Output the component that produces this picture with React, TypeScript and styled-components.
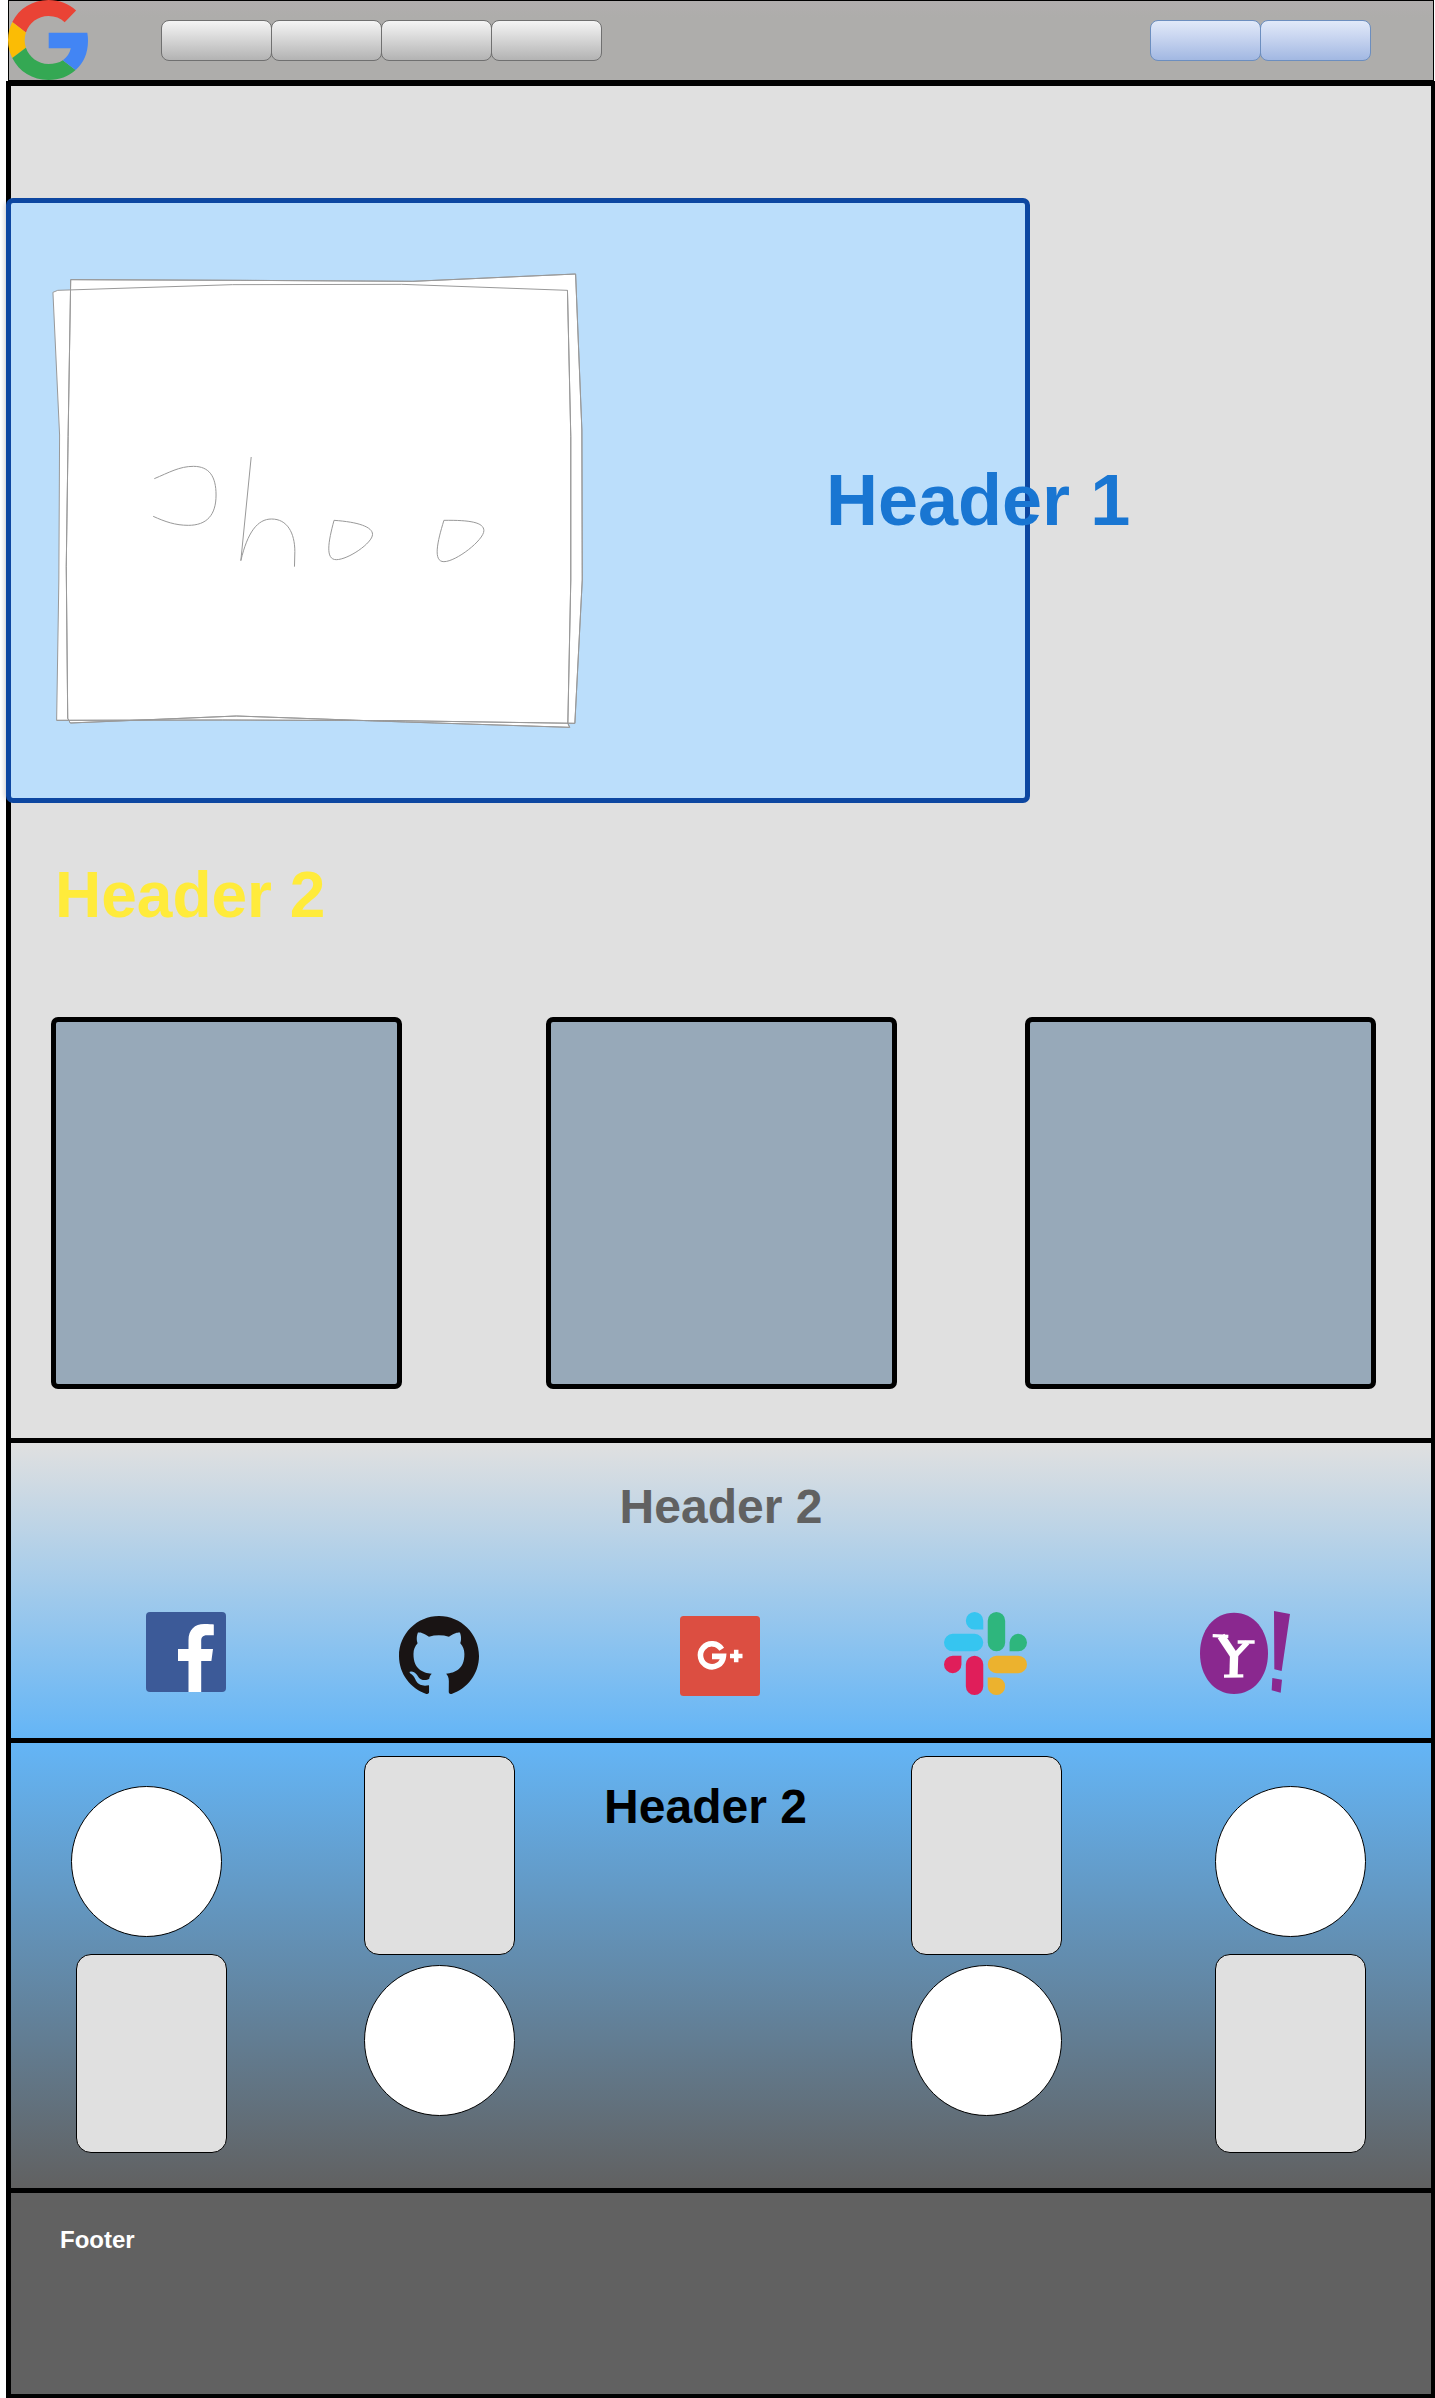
import React from "react";
import styled, { createGlobalStyle } from "styled-components";
import { SiGithub } from "react-icons/si";

const GlobalStyle = createGlobalStyle`
  body {
    margin: 0;
    background: #ffffff;
    font-family: "Liberation Sans", Arial, sans-serif;
  }
  *, *::before, *::after { box-sizing: border-box; }
  svg { display: block; flex: none; }
`;

const Page = styled.div`
  width: 100%;
  height: 2398px;
  padding-left: 6px;
  overflow: hidden;
`;

const TopBar = styled.header`
  display: flex;
  align-items: flex-start;
  width: 1426px;
  height: 81px;
  margin-left: 2px;
  border: 1px solid #000;
  background: linear-gradient(#b1aeae, #aeadab 20%, #aeadab);
`;

const LogoLink = styled.div`
  margin: -1px 0 0 -1px;
`;

const ButtonGroup = styled.nav<{ $start: number }>`
  display: flex;
  margin: 19px 0 0 ${(p) => p.$start}px;
`;

const BarButton = styled.button<{ $tone: "grey" | "blue" }>`
  width: 111px;
  height: 41px;
  padding: 0;
  border-radius: 8px;
  border: 1px solid ${(p) => (p.$tone === "grey" ? "#707070" : "#6c8ebf")};
  background: ${(p) =>
    p.$tone === "grey"
      ? "linear-gradient(#f5f5f5, #b3b3b3)"
      : "linear-gradient(#e1e9f9, #c3d1ee 50%, #a2b8e2)"};

  & + & {
    margin-left: -1px;
  }
`;

const Frame = styled.div`
  width: 1430px;
  border: 5px solid #000;
`;

const Intro = styled.main`
  height: 1357px;
  padding-top: 112px;
  border-bottom: 5px solid #000;
  background: #e0e0e0;
`;

const Hero = styled.section`
  display: flex;
  width: 1024px;
  height: 605px;
  margin-left: -5px;
  padding: 47px 0 0 19px;
  border: 5px solid #0d47a1;
  border-radius: 7px;
  background: #bbdefb;
  box-shadow: -5px 0 5px -4px rgba(0, 0, 0, 0.22);
`;

const HeroTitle = styled.h1`
  margin: 208px 0 0 216px;
  color: #1976d2;
  font-size: 72px;
  line-height: 84px;
  white-space: nowrap;
`;

const SectionTitle = styled.h2`
  margin: 55px 0 0 44px;
  color: #ffeb3b;
  font-size: 64px;
  line-height: 74px;
`;

const CardRow = styled.div`
  display: flex;
  margin: 85px 0 0 40px;
`;

const Card = styled.article<{ $gap?: number }>`
  width: 351px;
  height: 372px;
  margin-left: ${(p) => p.$gap ?? 0}px;
  border: 5px solid #000;
  border-radius: 7px;
  background: #97a9b9;
`;

const Social = styled.section`
  height: 300px;
  padding-top: 36px;
  border-bottom: 5px solid #000;
  background: linear-gradient(#e0e0e0, #64b5f6);
`;

const SubTitle = styled.h2<{ $color: string }>`
  margin: 0;
  color: ${(p) => p.$color};
  font-size: 48px;
  line-height: 56px;
  text-align: center;
  white-space: nowrap;
`;

const IconRow = styled.div`
  display: flex;
  margin-top: 76px;
  padding-left: 135px;
`;

const IconSlot = styled.a<{ $gap?: number; $drop?: number }>`
  margin: ${(p) => p.$drop ?? 0}px 0 0 ${(p) => p.$gap ?? 0}px;
  color: #191414;
`;

const Team = styled.section`
  display: flex;
  height: 450px;
  border-bottom: 5px solid #000;
  background: linear-gradient(#64b5f6, #616161);
`;

const Column = styled.div<{ $top: number; $left: number; $gap: number }>`
  display: flex;
  flex: none;
  flex-direction: column;
  align-items: flex-end;
  gap: ${(p) => p.$gap}px;
  margin: ${(p) => p.$top}px 0 0 ${(p) => p.$left}px;
`;

const Disc = styled.div<{ $inset?: number }>`
  width: 151px;
  height: 151px;
  margin-right: ${(p) => p.$inset ?? 0}px;
  border: 1px solid #000;
  border-radius: 50%;
  background: #fff;
`;

const Panel = styled.div`
  width: 151px;
  height: 199px;
  border: 1px solid #000;
  border-radius: 15px;
  background: #e0e0e0;
`;

const TeamHeading = styled.div`
  width: 396px;
  padding: 36px 15px 0 0;
`;

const Footer = styled.footer`
  height: 201px;
  padding: 33px 0 0 49px;
  background: #616161;
  color: #fff;
  font-size: 24px;
  font-weight: 700;
  line-height: 28px;
`;

const GoogleLogo = () => (
  <svg width="80" height="80" viewBox="0 0 80 80">
    <path fill="#ea4335" d="M4.300 22C11 8.500 24.500 0 40.500 0c11 0 20.300 4 27.600 10.400L56.700 22.200C52.500 18.200 47 16 40.500 16c-10.500 0-19.300 6.800-22.600 16.400z" />
    <path fill="#fbbc05" d="M4.300 22l13.600 10.400a24.400 24.400 0 0 0 0 15.400L4.300 58a40 40 0 0 1 0-36z" />
    <path fill="#34a853" d="M4.300 58l13.600-10.200C21.200 57.300 30 64 40.500 64c5.600 0 10.600-1.300 14.300-3.800L67.600 70C60.500 76.400 51.200 80 40.500 80 24.500 80 11 71.500 4.300 58z" />
    <path fill="#4285f4" d="M40.700 32.700h38.600c.5 2.600.7 5.400.7 8.100 0 12.300-4.400 22.600-12.400 29.200L54.800 60.200c4.200-2.800 7-6.900 8-11.900H40.700z" />
  </svg>
);

const Sketch = () => (
  <svg width="580" height="500" viewBox="0 0 1568 1500" preserveAspectRatio="none" fill="none" stroke="#999" strokeWidth="1">
    <path
      fill="#fff"
      vectorEffect="non-scaling-stroke"
      d="M62 127L75 121L547 104L1005 103L1453 121L1462 560L1462 990L1454 1420L1459 1432L1015 1416L558 1398L109 1419L102 1405L98 950L103 560L110 89L570 91L1035 94L1475 72L1492 540L1493 990L1473 1420L990 1412L520 1410L72 1411L78 990L80 555Z"
    />
    <path
      vectorEffect="non-scaling-stroke"
      d="M110 89L570 91L1035 94L1475 72L1492 540L1493 990L1473 1420L990 1412L520 1410L72 1411M110 89L103 560L98 950L102 1405L109 1419L558 1398L1015 1416L1459 1432L1454 1420L1462 990L1462 560L1453 121"
    />
    <path vectorEffect="non-scaling-stroke" d="M336 686C375 668 404 649 442 649C485 649 503 680 503 735C503 795 478 826 428 826C393 826 365 815 333 799" />
    <path vectorEffect="non-scaling-stroke" d="M598 621L570 932C588 847 615 807 653 807C695 807 716 848 716 905L715 950" />
    <path vectorEffect="non-scaling-stroke" d="M822 811C888 816 926 831 926 853C926 879 860 929 828 929C798 929 806 876 822 811Z" />
    <path vectorEffect="non-scaling-stroke" d="M1119 811C1190 810 1227 817 1227 842C1227 870 1152 935 1119 935C1089 935 1101 876 1119 811Z" />
  </svg>
);

const FacebookLogo = () => (
  <svg width="80" height="80" viewBox="0 0 80 80">
    <rect width="80" height="80" rx="4" fill="#3c5a98" />
    <path fill="#fff" d="M42.500 80V49H32V37h10.500v-9C42.500 17.800 48.700 12 58.300 12c4.400 0 8 .3 9.500.5v10.800h-6.500c-5.100 0-6.100 2.500-6.100 6V37H67l-1.600 12H55.200v31z" />
  </svg>
);

const GooglePlusLogo = () => (
  <svg width="80" height="80" viewBox="0 0 80 80">
    <rect width="80" height="80" rx="3.500" fill="#dc4e41" />
    <g fill="none" stroke="#fff">
      <path strokeWidth="5.600" d="M41.700 33.200A11.500 11.500 0 1 0 43.400 40.400H32" />
      <path strokeWidth="4.500" d="M50 40H62.500M56.200 33.800V46.200" />
    </g>
  </svg>
);

const SlackLogo = () => (
  <svg width="83" height="83" viewBox="0 0 24 24">
    <path fill="#e01e5a" d="M5.042 15.165a2.528 2.528 0 0 1-2.520 2.523A2.528 2.528 0 0 1 0 15.165a2.527 2.527 0 0 1 2.522-2.520h2.520v2.520zM6.313 15.165a2.527 2.527 0 0 1 2.521-2.520 2.527 2.527 0 0 1 2.521 2.520v6.313A2.528 2.528 0 0 1 8.834 24a2.528 2.528 0 0 1-2.521-2.522v-6.313z" />
    <path fill="#36c5f0" d="M8.834 5.042a2.528 2.528 0 0 1-2.521-2.520A2.528 2.528 0 0 1 8.834 0a2.528 2.528 0 0 1 2.521 2.522v2.520H8.834zM8.834 6.313a2.528 2.528 0 0 1 2.521 2.521 2.528 2.528 0 0 1-2.521 2.521H2.522A2.528 2.528 0 0 1 0 8.834a2.528 2.528 0 0 1 2.522-2.521h6.312z" />
    <path fill="#2eb67d" d="M18.956 8.834a2.528 2.528 0 0 1 2.522-2.521A2.528 2.528 0 0 1 24 8.834a2.528 2.528 0 0 1-2.522 2.521h-2.522V8.834zM17.688 8.834a2.528 2.528 0 0 1-2.523 2.521 2.527 2.527 0 0 1-2.520-2.521V2.522A2.527 2.527 0 0 1 15.165 0a2.528 2.528 0 0 1 2.523 2.522v6.312z" />
    <path fill="#ecb22e" d="M15.165 18.956a2.528 2.528 0 0 1 2.523 2.522A2.528 2.528 0 0 1 15.165 24a2.527 2.527 0 0 1-2.520-2.522v-2.522h2.520zM15.165 17.688a2.527 2.527 0 0 1-2.520-2.523 2.526 2.526 0 0 1 2.520-2.520h6.313A2.527 2.527 0 0 1 24 15.165a2.528 2.528 0 0 1-2.522 2.523h-6.313z" />
  </svg>
);

const YahooLogo = () => (
  <svg width="90" height="84" viewBox="30 33 270 252">
    <g fill="#8a288f">
      <path d="M132 38C192 38 234 90 234 160S192 282 132 282S30 230 30 160S72 38 132 38Z" />
      <path d="M252 33L300 42L275 213L253 208ZM247 234L276 239L272 278L245 271Z" />
    </g>
    <g fill="none" stroke="#fff">
      <path strokeWidth="10" d="M68 107L115 109M143 126H194M102 228.500L160 227.500" />
      <path strokeWidth="24" d="M93 108L133 168" />
      <path strokeWidth="16" d="M172 127L134 168" />
      <path strokeWidth="25" d="M132.500 160L130.500 228" />
    </g>
  </svg>
);

export default function App() {
  return (
    <>
      <GlobalStyle />
      <Page>
        <TopBar>
          <LogoLink>
            <GoogleLogo />
          </LogoLink>
          <ButtonGroup $start={73}>
            {[0, 1, 2, 3].map((n) => (
              <BarButton key={n} $tone="grey" />
            ))}
          </ButtonGroup>
          <ButtonGroup $start={548}>
            {[0, 1].map((n) => (
              <BarButton key={n} $tone="blue" />
            ))}
          </ButtonGroup>
        </TopBar>
        <Frame>
          <Intro>
            <Hero>
              <Sketch />
              <HeroTitle>Header 1</HeroTitle>
            </Hero>
            <SectionTitle>Header 2</SectionTitle>
            <CardRow>
              <Card />
              <Card $gap={144} />
              <Card $gap={128} />
            </CardRow>
          </Intro>
          <Social>
            <SubTitle $color="#616161">Header 2</SubTitle>
            <IconRow>
              <IconSlot $drop={1}>
                <FacebookLogo />
              </IconSlot>
              <IconSlot $gap={173} $drop={4}>
                <SiGithub size={80} />
              </IconSlot>
              <IconSlot $gap={201} $drop={5}>
                <GooglePlusLogo />
              </IconSlot>
              <IconSlot $gap={184} $drop={1}>
                <SlackLogo />
              </IconSlot>
              <IconSlot $gap={173}>
                <YahooLogo />
              </IconSlot>
            </IconRow>
          </Social>
          <Team>
            <Column $top={43} $left={60} $gap={17}>
              <Disc $inset={5} />
              <Panel />
            </Column>
            <Column $top={13} $left={137} $gap={10}>
              <Panel />
              <Disc />
            </Column>
            <TeamHeading>
              <SubTitle $color="#000">Header 2</SubTitle>
            </TeamHeading>
            <Column $top={13} $left={0} $gap={10}>
              <Panel />
              <Disc />
            </Column>
            <Column $top={43} $left={153} $gap={17}>
              <Disc />
              <Panel />
            </Column>
          </Team>
          <Footer>Footer</Footer>
        </Frame>
      </Page>
    </>
  );
}
